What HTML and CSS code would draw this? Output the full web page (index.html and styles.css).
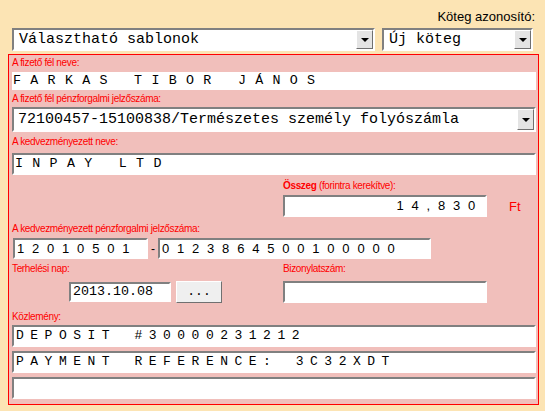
FILE: index.html
```html
<!DOCTYPE html>
<html lang="hu">
<head>
<meta charset="utf-8">
<title>Átutalás</title>
<link rel="stylesheet" href="styles.css">
</head>
<body>
<div class="page">
  <div class="batch-label">Köteg azonosító:</div>
  <div class="top-row">
    <div class="select sel-templates"><span class="select-text">Választható sablonok</span><span class="select-btn"></span></div>
    <div class="select sel-batch"><span class="select-text">Új köteg</span><span class="select-btn"></span></div>
  </div>
  <div class="panel">
    <div class="lbl lbl-payer">A fizető fél neve:</div>
    <div class="plain-field name-text">FARKAS TIBOR JÁNOS</div>
    <div class="lbl lbl-payer-acct">A fizető fél pénzforgalmi jelzőszáma:</div>
    <div class="select sel-account"><span class="select-text">72100457-15100838/Természetes személy folyószámla</span><span class="select-btn"></span></div>
    <div class="lbl lbl-benef">A kedvezményezett neve:</div>
    <div class="field benef-field name-text">INPAY LTD</div>
    <div class="amount-block">
      <div class="lbl"><b>Összeg</b> (forintra kerekítve):</div>
      <div class="amount-row">
        <div class="field amount-field digits">14,830</div>
        <span class="currency">Ft</span>
      </div>
    </div>
    <div class="lbl lbl-benef-acct">A kedvezményezett pénzforgalmi jelzőszáma:</div>
    <div class="acct-row">
      <div class="field acct1 digits">12010501</div>
      <span class="dash">-</span>
      <div class="field acct2 digits">0123864500100000</div>
    </div>
    <div class="date-grid">
      <div class="lbl">Terhelési nap:</div>
      <div class="lbl">Bizonylatszám:</div>
      <div class="date-cell">
        <div class="field date-field">2013.10.08</div>
        <div class="btn">...</div>
      </div>
      <div class="field doc-field"></div>
    </div>
    <div class="lbl lbl-memo">Közlemény:</div>
    <div class="field memo memo1">DEPOSIT #30000231212</div>
    <div class="field memo">PAYMENT REFERENCE: 3C32XDT</div>
    <div class="field memo"></div>
  </div>
</div>
</body>
</html>
```
FILE: styles.css
```css
* { box-sizing: border-box; }
html, body { margin: 0; padding: 0; }
body {
  background: #fce4b4;
  font-family: "Liberation Sans", Arial, sans-serif;
  width: 545px;
  height: 411px;
  overflow: hidden;
}
.page { padding-top: 9px; }
.batch-label {
  text-align: right;
  padding-right: 10px;
  font-size: 13px;
  line-height: 15px;
  color: #000;
}
.top-row { display: flex; gap: 7px; margin: 4px 0 0 12px; }

.select {
  display: flex;
  align-items: stretch;
  height: 23px;
  background: #fff;
  border: 2px solid;
  border-color: #808080 #fff #fff #808080;
  font-family: "Liberation Mono", "Courier New", monospace;
  font-size: 15px;
  color: #000;
}
.select-text {
  flex: 1;
  padding-left: 5px;
  line-height: 19px;
  white-space: pre;
  overflow: hidden;
}
.select-btn {
  width: 17px;
  flex: none;
  background: #e4e4e4;
  border: 1px solid;
  border-color: #fff #707070 #707070 #fff;
  display: flex;
  align-items: center;
  justify-content: center;
}
.select-btn::after {
  content: "";
  border-left: 4px solid transparent;
  border-right: 4px solid transparent;
  border-top: 4px solid #000;
}
.sel-templates { width: 363px; }
.sel-batch { width: 151px; }
.sel-account { width: 524px; height: 25px; margin-top: 2px; }
.sel-account .select-text { line-height: 21px; padding-left: 4px; }

.panel {
  margin: 3px 0 0 8px;
  width: 531px;
  border: 1px solid #f00;
  background: #f1bfbb;
  padding: 0 0 5px 3px;
}
.lbl {
  font-size: 10px;
  letter-spacing: -0.35px;
  line-height: 13px;
  height: 13px;
  color: #f00;
  white-space: nowrap;
}
.lbl-payer { margin-top: 1px; }
.lbl-payer-acct { margin-top: 2px; }
.lbl-benef { margin-top: 3px; }
.lbl-benef-acct { margin-top: 5px; }
.lbl-memo { margin-top: 7px; }

.field {
  background: #fff;
  border: 2px solid;
  border-color: #808080 #fff #fff #808080;
  color: #000;
  white-space: pre;
  overflow: hidden;
}
.plain-field {
  background: #fff;
  width: 524px;
  height: 18px;
  margin-top: 3px;
  line-height: 18px;
  padding-left: 1px;
  white-space: pre;
}
.name-text {
  font-family: "Liberation Mono", "Courier New", monospace;
  font-size: 13.33px;
  letter-spacing: 9.3px;
}
.benef-field {
  width: 524px;
  height: 22px;
  margin-top: 5px;
  line-height: 18px;
  padding-left: 1px;
}

.amount-block { margin: 4px 0 0 271px; }
.amount-row { display: flex; align-items: center; margin-top: 3px; }
.digits {
  font-family: "Liberation Sans", Arial, sans-serif;
  font-size: 13px;
  letter-spacing: 7.8px;
}
.amount-field {
  width: 204px;
  height: 22px;
  line-height: 18px;
  text-align: right;
  padding-right: 2px;
}
.currency {
  margin-left: 22px;
  color: #f00;
  font-size: 13px;
}

.acct-row { display: flex; align-items: center; margin: 3px 0 0 1px; }
.acct1 { width: 135px; height: 21px; line-height: 17px; padding-left: 2px; }
.acct2 { width: 273px; height: 21px; line-height: 17px; padding-left: 2px; }
.dash { width: 10px; text-align: center; font-size: 12px; color: #000; }

.date-grid {
  display: grid;
  grid-template-columns: 271px 204px;
  row-gap: 6px;
  margin-top: 3px;
}
.date-cell { display: flex; align-items: center; padding-left: 57px; }
.date-field {
  width: 102px;
  height: 20px;
  line-height: 16px;
  padding-left: 2px;
  font-family: "Liberation Mono", "Courier New", monospace;
  font-size: 13.33px;
}
.btn {
  width: 46px;
  height: 22px;
  margin-left: 5px;
  background: #efefef;
  border: 1px solid;
  border-color: #fff #707070 #707070 #fff;
  font-family: "Liberation Mono", "Courier New", monospace;
  font-size: 13px;
  line-height: 20px;
  text-align: center;
  color: #000;
}
.doc-field { width: 204px; height: 22px; }

.memo {
  width: 524px;
  height: 22px;
  margin-top: 4px;
  line-height: 18px;
  padding-left: 2px;
  font-family: "Liberation Mono", "Courier New", monospace;
  font-size: 13px;
  letter-spacing: 6.5px;
  word-spacing: 4px;
}
.memo1 { margin-top: 2px; }
```
